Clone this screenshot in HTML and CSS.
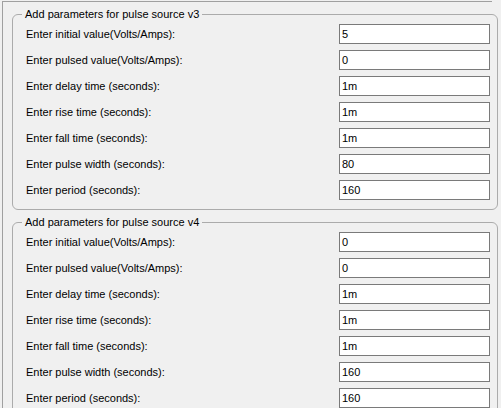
FILE: index.html
```html
<!DOCTYPE html>
<html>
<head>
<meta charset="utf-8">
<link rel="stylesheet" href="styles.css">
</head>
<body>
<div class="frame">
  <fieldset class="group">
    <legend>Add parameters for pulse source v3</legend>
    <div class="rows">
      <label>Enter initial value(Volts/Amps):</label><div class="field">5</div>
      <label>Enter pulsed value(Volts/Amps):</label><div class="field">0</div>
      <label>Enter delay time (seconds):</label><div class="field">1m</div>
      <label>Enter rise time (seconds):</label><div class="field">1m</div>
      <label>Enter fall time (seconds):</label><div class="field">1m</div>
      <label>Enter pulse width (seconds):</label><div class="field">80</div>
      <label>Enter period (seconds):</label><div class="field">160</div>
    </div>
  </fieldset>
  <fieldset class="group">
    <legend>Add parameters for pulse source v4</legend>
    <div class="rows">
      <label>Enter initial value(Volts/Amps):</label><div class="field">0</div>
      <label>Enter pulsed value(Volts/Amps):</label><div class="field">0</div>
      <label>Enter delay time (seconds):</label><div class="field">1m</div>
      <label>Enter rise time (seconds):</label><div class="field">1m</div>
      <label>Enter fall time (seconds):</label><div class="field">1m</div>
      <label>Enter pulse width (seconds):</label><div class="field">160</div>
      <label>Enter period (seconds):</label><div class="field">160</div>
    </div>
  </fieldset>
</div>
</body>
</html>
```
FILE: styles.css
```css
html, body {
  margin: 0;
  padding: 0;
  background: #f0f0f0;
  font-family: "Liberation Sans", Arial, sans-serif;
  font-size: 11px;
  color: #000;
  overflow: hidden;
  height: 408px;
}
.frame {
  margin: 1px 0 0 2px;
  width: 490px;
  height: 420px;
  border-top: 1px solid #a0a0a0;
  border-left: 1px solid #a0a0a0;
  padding-top: 5px;
  box-sizing: border-box;
}
.group {
  margin: 0 0 5px 9px;
  width: 486px;
  box-sizing: border-box;
  border: 1px solid #ababab;
  border-radius: 6px;
  padding: 3px 7px 9px 13px;
  min-inline-size: 0;
}
.group legend {
  padding: 0 3px;
  margin-left: -4px;
  line-height: 14px;
  height: 14px;
}
.rows {
  display: grid;
  grid-template-columns: 1fr 151px;
  grid-auto-rows: 20px;
  row-gap: 6px;
}
.rows label {
  display: flex;
  align-items: center;
  line-height: 13px;
}
.field {
  background: #fff;
  border: 1px solid #7a7a7a;
  box-sizing: border-box;
  padding-left: 2px;
  display: flex;
  align-items: center;
  line-height: 13px;
}
```
